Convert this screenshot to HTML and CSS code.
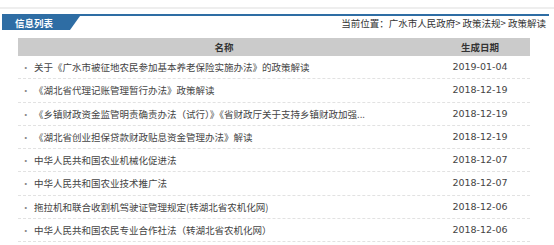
FILE: index.html
```html
<!DOCTYPE html>
<html lang="zh-CN">
<head>
    <meta charset="UTF-8">
    <meta name="viewport" content="width=device-width, initial-scale=1.0">
    <title>政策解读</title>
    <link rel="stylesheet" href="styles.css">
</head>
<body>
    <div class="top-strip"></div>
    <div class="title-bar">
        <div class="tab">信息列表</div>
        <div class="crumbs">当前位置：广水市人民政府&gt; 政策法规&gt; 政策解读</div>
    </div>
    <div class="list">
        <div class="list-head">
            <div class="col-name">名称</div>
            <div class="col-date">生成日期</div>
        </div>
        <div class="row">
            <div class="col-name"><span class="dot">·</span><a href="#">关于《广水市被征地农民参加基本养老保险实施办法》的政策解读</a></div>
            <div class="col-date">2019-01-04</div>
        </div>
        <div class="row">
            <div class="col-name"><span class="dot">·</span><a href="#">《湖北省代理记账管理暂行办法》政策解读</a></div>
            <div class="col-date">2018-12-19</div>
        </div>
        <div class="row">
            <div class="col-name"><span class="dot">·</span><a href="#">《乡镇财政资金监管明责确责办法（试行）》《省财政厅关于支持乡镇财政加强...</a></div>
            <div class="col-date">2018-12-19</div>
        </div>
        <div class="row">
            <div class="col-name"><span class="dot">·</span><a href="#">《湖北省创业担保贷款财政贴息资金管理办法》解读</a></div>
            <div class="col-date">2018-12-19</div>
        </div>
        <div class="row">
            <div class="col-name"><span class="dot">·</span><a href="#">中华人民共和国农业机械化促进法</a></div>
            <div class="col-date">2018-12-07</div>
        </div>
        <div class="row">
            <div class="col-name"><span class="dot">·</span><a href="#">中华人民共和国农业技术推广法</a></div>
            <div class="col-date">2018-12-07</div>
        </div>
        <div class="row">
            <div class="col-name"><span class="dot">·</span><a href="#">拖拉机和联合收割机驾驶证管理规定(转湖北省农机化网)</a></div>
            <div class="col-date">2018-12-06</div>
        </div>
        <div class="row">
            <div class="col-name"><span class="dot">·</span><a href="#">中华人民共和国农民专业合作社法（转湖北省农机化网）</a></div>
            <div class="col-date">2018-12-06</div>
        </div>
    </div>
</body>
</html>
```

FILE: styles.css
```css
body {
    margin: 0;
    padding: 0;
    background: #fff;
    font-family: "Noto Sans CJK SC", "Noto Sans", sans-serif;
    font-size: 9.5px;
    color: #333;
}
.top-strip {
    height: 7px;
    border-bottom: 2px solid #eee;
}
.title-bar {
    display: flex;
    justify-content: space-between;
    align-items: stretch;
    margin: 5px 5px 0 2px;
    border-top: 2px solid #2e6da4;
    height: 14px;
}
.tab {
    width: 65px;
    padding-left: 13px;
    background: #2e6da4;
    color: #fff;
    font-weight: bold;
    line-height: 14px;
    clip-path: polygon(0 0, 100% 0, calc(100% - 10px) 100%, 0 100%);
}
.crumbs {
    padding-right: 3px;
    line-height: 14px;
    color: #333;
}
.list {
    width: 512px;
    margin: 8px 0 0 18px;
}
.list-head {
    display: flex;
    height: 18px;
    line-height: 18px;
    background: #cbcbcb;
    font-weight: bold;
    color: #333;
}
.list-head .col-name {
    text-align: center;
}
.row {
    display: flex;
    height: 22.25px;
    line-height: 22px;
    border-bottom: 1px dashed #e2e2e2;
}
.col-name {
    flex: 1;
    display: flex;
    min-width: 0;
}
.list-head .col-name {
    justify-content: center;
}
.col-date {
    width: 100px;
    text-align: center;
    font-family: "DejaVu Sans", sans-serif;
    color: #444;
}
.list-head .col-date {
    font-family: "Noto Sans CJK SC", sans-serif;
    color: #333;
}
.dot {
    width: 13px;
    padding-left: 3px;
    color: #888;
}
.row a {
    color: #444;
    text-decoration: none;
    white-space: nowrap;
    overflow: hidden;
}
```
